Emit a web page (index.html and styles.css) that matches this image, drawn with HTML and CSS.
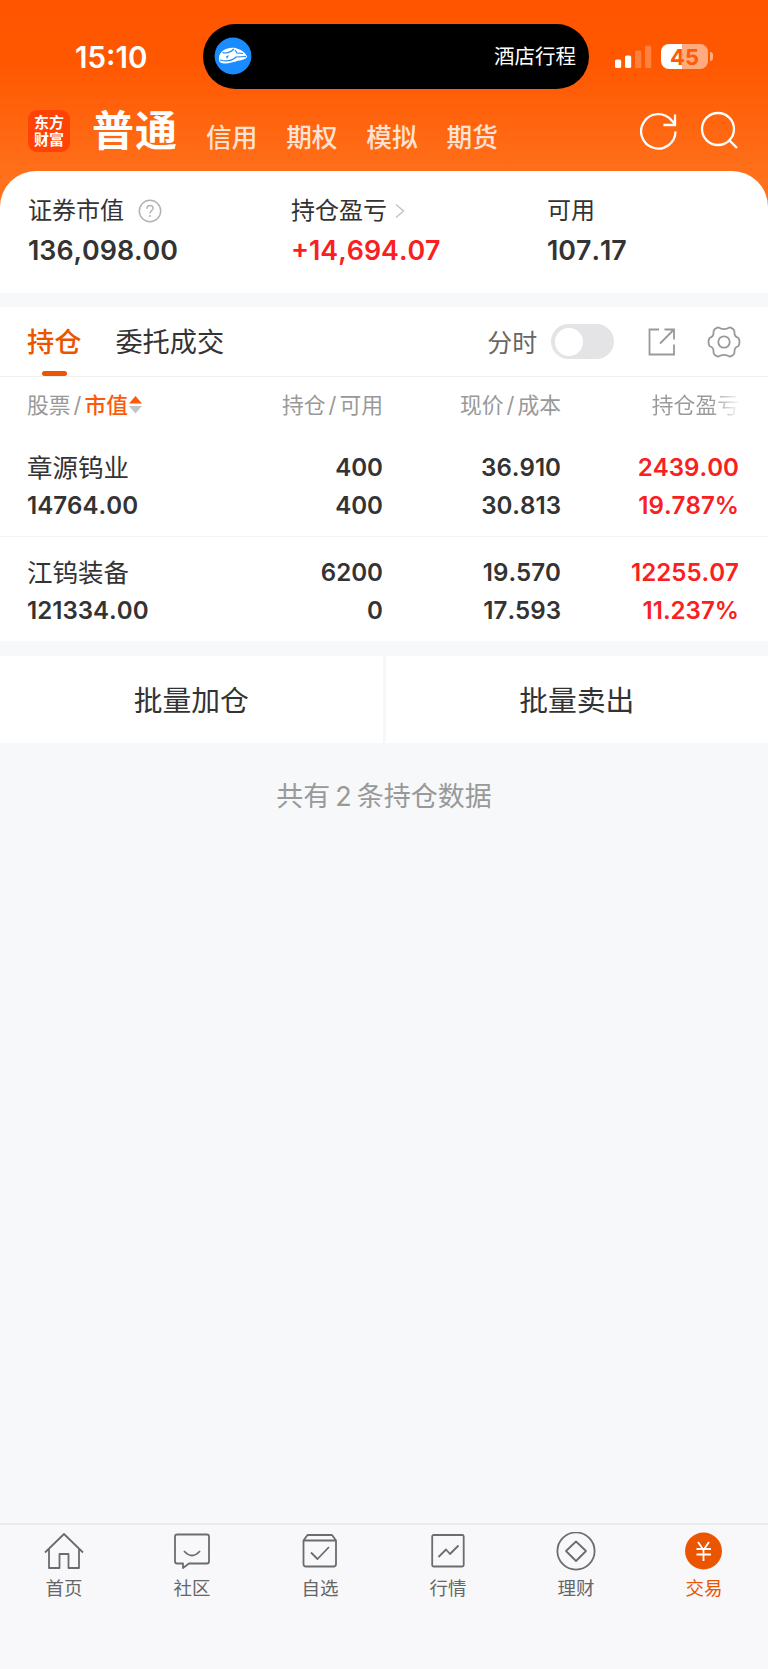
FILE: index.html
```html
<!DOCTYPE html>
<html lang="zh-CN">
<head>
<meta charset="utf-8">
<title>持仓</title>
<link rel="stylesheet" href="styles.css">
</head>
<body>
<div class="app">
  <header class="top">
    <div class="status">
      <div class="time">15:10</div>
      <div class="island">
        <svg class="train" width="38" height="38" viewBox="0 0 38 38"><circle cx="19" cy="19" r="18.400" fill="#1a8cff"/><path d="M5 21C5 14 13 10 20 10.800C26 12 31 15 33 19.500C33 22 28 23 24 23.800C18 26 10 27.500 6.500 25.500C5 24.500 5 23 5 21Z" fill="#fff"/><path d="M8.500 15.500C12 17 17 15 20 12M21 13L23 16L29 16.500M6 23C13 25 19 23 22 20L32 19.500" fill="none" stroke="#1a8cff" stroke-width="1.200"/><path d="M12 19.500L15 18L13 22Z" fill="#1a8cff"/></svg>
        <span class="trip">酒店行程</span>
      </div>
      <svg class="signal" width="37" height="24" viewBox="0 0 37 24"><g fill="#fff"><rect x="0" y="14.500" width="6.200" height="8.500" rx="1.600"/><rect x="10" y="10.500" width="6.200" height="12.500" rx="1.600"/><g opacity=".25"><rect x="20" y="5.500" width="6.200" height="17.500" rx="1.600"/><rect x="30" y="0.500" width="6.200" height="22.500" rx="1.600"/></g></g></svg>
      <div class="battery">45</div>
      <div class="nub"></div>
    </div>
    <div class="nav">
      <div class="logo"><span>东方</span><span>财富</span></div>
      <div class="current">普通</div>
      <div class="modes"><span>信用</span><span>期权</span><span>模拟</span><span>期货</span></div>
      <svg class="navicons" width="100" height="42" viewBox="0 0 100 42" fill="none" stroke="#fff" stroke-width="2.300"><path d="M35.500 21.500A17.200 17.200 0 1 1 31.500 10.300L35 14M35 4.500V15H23.500"/><circle cx="78" cy="19" r="16"/><path d="M89.500 30.500L97 38"/></svg>
    </div>
  </header>

  <section class="summary">
    <div class="cell c1"><div class="label">证券市值<svg class="help" width="24" height="24" viewBox="0 0 24 24" fill="none" stroke="#b3b3b3" stroke-width="1.500"><circle cx="12" cy="12" r="10.700"/><path d="M8.900 9.800C8.900 5.200 15.300 5.500 15.100 9.300C15 11.500 12 11.600 12 14.500M12 16V18"/></svg></div><div class="value">136,098.00</div></div>
    <div class="cell c2"><div class="label">持仓盈亏<svg class="chev" width="10" height="16" viewBox="0 0 10 16" fill="none" stroke="#c4c4c4" stroke-width="1.500"><path d="M1 1.500L8.500 8L1 14.500"/></svg></div><div class="value red">+14,694.07</div></div>
    <div class="cell"><div class="label">可用</div><div class="value">107.17</div></div>
  </section>

  <section class="panel">
    <div class="tabs">
      <div class="tab active">持仓</div>
      <div class="tab">委托成交</div>
      <div class="minute">分时</div>
      <div class="switch"></div>
      <svg class="export" width="28" height="28" viewBox="0 0 28 28" fill="none" stroke="#999" stroke-width="1.800"><path d="M11 1.500H1.500V26.500H26V16.500M16.500 1.500H26V11.500M26 1.500L12 15.500"/></svg>
      <svg class="gear" width="34" height="34" viewBox="0 0 34 34" fill="none" stroke="#999" stroke-width="1.800" stroke-linejoin="round"><circle cx="17" cy="17" r="5.700"/><path d="M11 2.300Q17 5.800 23 2.300Q27.500 4 27.500 7Q27 11.500 31.500 13Q33.500 17 31.500 21Q27 22.500 27.500 27Q27.500 30 23 31.700Q17 28.200 11 31.700Q6.500 30 6.500 27Q7 22.500 2.500 21Q.5 17 2.500 13Q7 11.500 6.500 7Q6.500 4 11 2.300Z"/></svg>
    </div>
    <div class="row head">
      <div>股票<i>/</i><b>市值</b><svg class="sort" width="14" height="20" viewBox="0 0 14 20"><path d="M0 8.500L6.500 1L13 8.500Z" fill="#fa5a0a"/><path d="M0 11L6.500 18.500L13 11Z" fill="#c4c4c4"/></svg></div>
      <div>持仓<i>/</i>可用</div><div>现价<i>/</i>成本</div><div class="fade">持仓盈亏</div>
    </div>
    <div class="row stock">
      <div><span class="name">章源钨业</span><span>14764.00</span></div>
      <div><span>400</span><span>400</span></div>
      <div><span>36.910</span><span>30.813</span></div>
      <div class="red"><span>2439.00</span><span>19.787%</span></div>
    </div>
    <div class="row stock last">
      <div><span class="name">江钨装备</span><span>121334.00</span></div>
      <div><span>6200</span><span>0</span></div>
      <div><span>19.570</span><span>17.593</span></div>
      <div class="red"><span>12255.07</span><span>11.237%</span></div>
    </div>
  </section>

  <section class="batch"><div>批量加仓</div><div>批量卖出</div></section>
  <div class="count">共有<i>2</i>条持仓数据</div>

  <nav class="bar">
    <div><svg width="40" height="40" viewBox="0 0 40 40"><path d="M1 20.500L20 2L39 20.500M5 17V36H15.500V22H24.500V36H35V17"/></svg>首页</div>
    <div><svg width="40" height="40" viewBox="0 0 40 40"><path d="M5 2.500H35Q37 2.500 37 4.500V29.500Q37 31.500 35 31.500H17L11 36V31.500H5Q3 31.500 3 29.500V4.500Q3 2.500 5 2.500ZM12 19Q20 28 28 19"/></svg>社区</div>
    <div><svg width="40" height="40" viewBox="0 0 40 40"><path d="M3.500 8.500H36V32Q36 34.500 33.500 34.500H6Q3.500 34.500 3.500 32V8.500L7.500 3H32L36 8.500M11 20.500L17.500 27L29 15"/></svg>自选</div>
    <div><svg width="40" height="40" viewBox="0 0 40 40"><rect x="4.200" y="3" width="31.500" height="31.500" rx="1.500"/><path d="M10.500 25L18 17.500L22 22L30.500 13.500"/></svg>行情</div>
    <div><svg width="40" height="40" viewBox="0 0 40 40"><circle cx="20" cy="19" r="18.600"/><path d="M20 9.500L30 19L20 29L10 19Z"/></svg>理财</div>
    <div class="on"><svg width="40" height="40" viewBox="0 0 40 40"><circle cx="19.500" cy="19" r="18.500" fill="#eb5500" stroke="none"/><path d="M14 10L19.500 18L25 10M12.500 17H27M12.500 22.500H27M19.500 17V29" stroke="#fff"/></svg>交易</div>
  </nav>
</div>
</body>
</html>
```
FILE: styles.css
```css
* { box-sizing: border-box; }
body { margin: 0; background: #f7f8fa; font-family: Inter, "Noto Sans CJK SC", sans-serif; color: #333; }
i { font-style: normal; }
.app { width: 768px; height: 1669px; display: flex; flex-direction: column; overflow: hidden; background: #f6f8fa; }
.top { height: 215px; flex: none; background: linear-gradient(#ff5500 0, #ff5700 60px, #ff711c 180px); }
.status { display: flex; height: 100px; padding-top: 24px; }
.time { width: 203px; padding-left: 75px; color: #fff; font-size: 29.500px; font-weight: 600; line-height: 67px; }
.island { width: 386px; height: 64.500px; border-radius: 33px; background: #000; color: #fff; display: flex; align-items: center; justify-content: space-between; padding: 0 13px 0 11px; }
.trip { font-size: 20.500px; line-height: 60px; padding-top: 2px; }
.signal { margin: 20.500px 0 0 26px; flex: none; }
.battery { width: 47px; height: 25.500px; margin: 19.500px 0 0 9px; border-radius: 8px; background: linear-gradient(90deg, #fff 21px, #ffab80 21px); color: #ff5a08; text-align: center; font-size: 22px; font-weight: 700; line-height: 26px; }
.nub { width: 3px; height: 9px; margin: 28px 0 0 2px; border-radius: 0 4px 4px 0; background: #ffab80; }
.nav { display: flex; height: 71px; padding: 0 28px; color: #fff; }
.logo { width: 42px; height: 42px; margin-top: 10px; border-radius: 9px; background: #ff4307; text-align: center; font-family: "Liberation Sans", "Noto Sans CJK SC", sans-serif; font-weight: 700; font-size: 15px; line-height: 17px; padding-top: 4px; }
.logo span { display: block; height: 17px; }
.current { margin: 0 0 0 22px; width: 87px; font-size: 42px; letter-spacing: 1px; font-weight: 700; line-height: 62px; white-space: nowrap; }
.modes { display: flex; width: 461px; padding-left: 27px; gap: 28.800px; font-size: 25.700px; line-height: 76px; font-weight: 500; color: #ffe2d3; }
.navicons { margin: 10px 0 0 0; flex: none; }
.summary { flex: none; height: 122px; margin-top: -44px; background: #fff; border-radius: 36px 36px 0 0; display: flex; padding: 22px 0 0 28px; }
.c1 { width: 263px; }
.c2 { width: 256px; }
.label { display: flex; align-items: center; height: 36px; font-size: 24px; line-height: 36px; }
.help { margin-left: 14px; }
.chev { margin-left: 8px; }
.value { font-size: 26.800px; font-weight: 600; line-height: 43px; font-kerning: none; }
.red { color: #fa2020; }
.panel { flex: none; margin-top: 14px; height: 334px; background: #fff; }
.tabs { display: flex; align-items: center; height: 70px; padding-left: 27px; border-bottom: 1px solid #eff0f2; }
.tab { position: relative; height: 69px; line-height: 71px; font-size: 27.200px; margin-right: 34px; }
.active { color: #eb5500; font-weight: 500; }
.active::after { content: ""; position: absolute; left: 15px; bottom: 0; width: 25px; height: 5px; border-radius: 2.500px; background: #eb5500; }
.minute { margin: -2px 0 0 229px; width: 64px; font-size: 25px; color: #666; }
.switch { width: 63px; height: 35px; border-radius: 18px; background: #e4e4e6; padding: 3.500px; }
.switch::before { content: ""; display: block; width: 28px; height: 28px; border-radius: 50%; background: #fff; }
.export { margin-left: 33.500px; }
.gear { margin-left: 31px; }
.row { display: grid; grid-template-columns: 180px 176px 178px 178px; padding-left: 27px; text-align: right; }
.row > :first-child { text-align: left; }
.head { height: 55px; line-height: 56px; font-size: 21.800px; color: #999; white-space: nowrap; }
.head i { margin: 0 3px; }
.head b { font-weight: 500; color: #fa5a0a; }
.sort { vertical-align: -2px; margin-left: 1px; }
.fade { background: linear-gradient(90deg, #999 150px, #fff 180px); background-clip: text; color: transparent; }
.stock { height: 105px; padding-top: 16px; border-bottom: 1px solid #f3f4f6; font-size: 24.100px; font-weight: 600; font-kerning: none; }
.stock span { display: block; line-height: 40px; height: 38px; }
.stock .name { font-weight: 400; font-size: 25.500px; line-height: 40px; }
.last { border: 0; }
.batch { flex: none; margin-top: 15px; height: 87px; display: grid; grid-template-columns: 1fr 1fr; gap: 3px; }
.batch div { background: #fff; text-align: center; font-size: 28.800px; line-height: 84px; padding-top: 3px; }
.count { text-align: center; font-size: 27px; color: #999; line-height: 40px; margin-top: 34px; }
.count i { margin: 0 5px; }
.bar { margin-top: auto; flex: none; height: 146px; border-top: 2px solid #e9ebf0; background: #f8f8fb; display: grid; grid-template-columns: repeat(6, 1fr); }
.bar div { display: flex; flex-direction: column; align-items: center; padding-top: 7px; font-size: 18.500px; line-height: 32px; color: #666; }
.bar svg { fill: none; stroke: #6c6c6c; stroke-width: 1.800; stroke-linejoin: round; }
.bar .on { color: #eb5500; }
```
